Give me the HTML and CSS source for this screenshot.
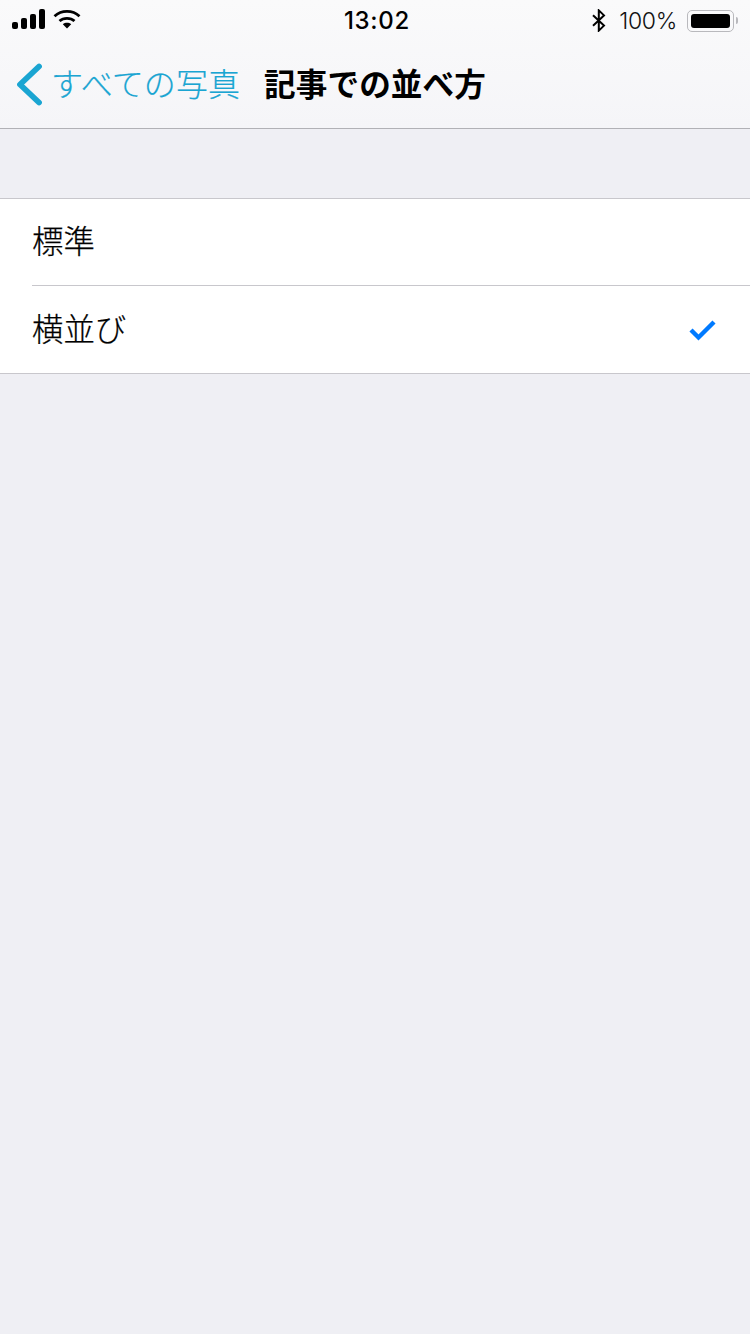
FILE: index.html
```html
<!DOCTYPE html>
<html lang="ja">
<head>
<meta charset="utf-8">
<title>記事での並べ方</title>
<link rel="stylesheet" href="styles.css">
</head>
<body>
<div class="app">
  <header class="header">
    <div class="status">
      <div class="status-left">
        <svg class="signal" width="33" height="20" viewBox="0 0 33 20" aria-hidden="true">
          <rect x="0" y="13" width="6" height="7" rx="2"/>
          <rect x="9" y="9" width="6" height="11" rx="2"/>
          <rect x="18" y="5" width="6" height="15" rx="2"/>
          <rect x="27" y="0" width="6" height="20" rx="2"/>
        </svg>
        <svg class="wifi" width="28" height="20" viewBox="0 0 28 20" aria-hidden="true">
          <path d="M1.5 7.2C8.5 .8 19.5 .8 26.5 7.2" fill="none" stroke="#000" stroke-width="2.8"/>
          <path d="M6.5 12C10.6 8.4 17.4 8.4 21.5 12" fill="none" stroke="#000" stroke-width="2.8"/>
          <path d="M9.8 15.2C12.2 13.3 15.8 13.3 18.2 15.2L14 19.6Z"/>
        </svg>
      </div>
      <div class="time">13:02</div>
      <div class="status-right">
        <svg class="bt" width="14" height="23" viewBox="0 0 14 23" aria-hidden="true">
          <path d="M1 6.2L12 16.6L6.8 21.6V1.4L12 6.4L1 16.8" fill="none" stroke="#000" stroke-width="2"/>
        </svg>
        <span class="percent">100%</span>
        <div class="battery"><div class="battery-fill"></div></div>
        <div class="battery-tip"></div>
      </div>
    </div>
    <nav class="nav">
      <a class="back">
        <svg class="chevron" width="26" height="48" viewBox="0 0 26 48" aria-hidden="true">
          <path d="M23 8.5L4 26.5L23 44.5" fill="none" stroke="#1aa5d2" stroke-width="5.8" stroke-linecap="round" stroke-linejoin="round"/>
        </svg>
        <span class="back-label">すべての写真</span>
      </a>
      <h1 class="title">記事での並べ方</h1>
    </nav>
  </header>
  <main class="main">
    <ul class="list">
      <li class="row"><span class="row-label">標準</span></li>
      <li class="row"><span class="row-label">横並び</span>
        <svg class="check" width="28" height="22" viewBox="0 0 28 22" aria-hidden="true">
          <path d="M2 11L9.5 18.5L25 3" fill="none" stroke="#007aff" stroke-width="4.4"/>
        </svg>
      </li>
    </ul>
  </main>
</div>
</body>
</html>
```

FILE: styles.css
```css
* { box-sizing: border-box; }
html, body { margin: 0; padding: 0; }
body {
  width: 750px;
  height: 1334px;
  overflow: hidden;
  background: #efeff4;
  color: #000;
  font-family: "Noto Sans CJK JP", "Noto Sans", sans-serif;
}
.app { display: flex; flex-direction: column; height: 1334px; }
.header {
  height: 129px;
  flex: none;
  background: linear-gradient(#fafafb, #f5f5f8);
  border-bottom: 1px solid #b1b1b6;
}
.status {
  height: 41px;
  padding: 9px 12px 0;
  display: grid;
  grid-template-columns: 1fr auto 1fr;
  align-items: start;
}
.status-left { display: flex; gap: 8px; }
.signal, .wifi, .bt, .check, .chevron { display: block; flex: none; }
.time {
  font-family: "Inter", "Liberation Sans", sans-serif;
  font-size: 24px;
  line-height: 24px;
  font-weight: 500;
  letter-spacing: .7px;
  padding-left: 4px;
}
.status-right { display: flex; justify-content: flex-end; align-items: flex-start; }
.bt { margin-right: 13px; }
.percent {
  font-family: "Inter", "Liberation Sans", sans-serif;
  font-size: 23px;
  line-height: 24px;
  font-weight: 300;
  letter-spacing: -.3px;
  margin-right: 10px;
  color: #111;
}
.battery {
  width: 47px;
  height: 22px;
  margin-top: 1px;
  padding: 3px;
  border: 1px solid #b9b9bd;
  border-radius: 5px;
}
.battery-fill { width: 100%; height: 100%; background: #000; border-radius: 3px; }
.battery-tip {
  width: 2px;
  height: 7px;
  margin: 8px 0 0 2px;
  background: #b9b9bd;
  border-radius: 0 2px 2px 0;
}
.nav {
  height: 87px;
  padding: 0 0 6px 16px;
  display: flex;
  align-items: center;
}
.back { display: flex; align-items: center; color: #1aa5d2; }
.chevron { margin-right: 9px; }
.back-label { font-size: 32px; line-height: 44px; font-weight: 300; letter-spacing: .1px; -webkit-text-stroke: .2px #1aa5d2; }
.title {
  margin: 0 0 0 24px;
  font-size: 31.6px;
  line-height: 44px;
  font-weight: 700;
  letter-spacing: .1px;
}
.main { flex: 1; padding-top: 69px; }
.list {
  list-style: none;
  margin: 0;
  padding: 0 0 0 32px;
  background: #fff;
  border-top: 1px solid #c8c7cc;
  border-bottom: 1px solid #c8c7cc;
}
.row {
  height: 88px;
  padding: 0 32px 4px 0;
  display: flex;
  align-items: center;
  justify-content: space-between;
  border-top: 1px solid #c8c7cc;
}
.row:first-child { height: 86px; border-top: 0; }
.row-label { font-size: 31.4px; line-height: 44px; font-weight: 300; -webkit-text-stroke: .25px #000; }
.check { margin: 4px 1px 0 0; }
```
